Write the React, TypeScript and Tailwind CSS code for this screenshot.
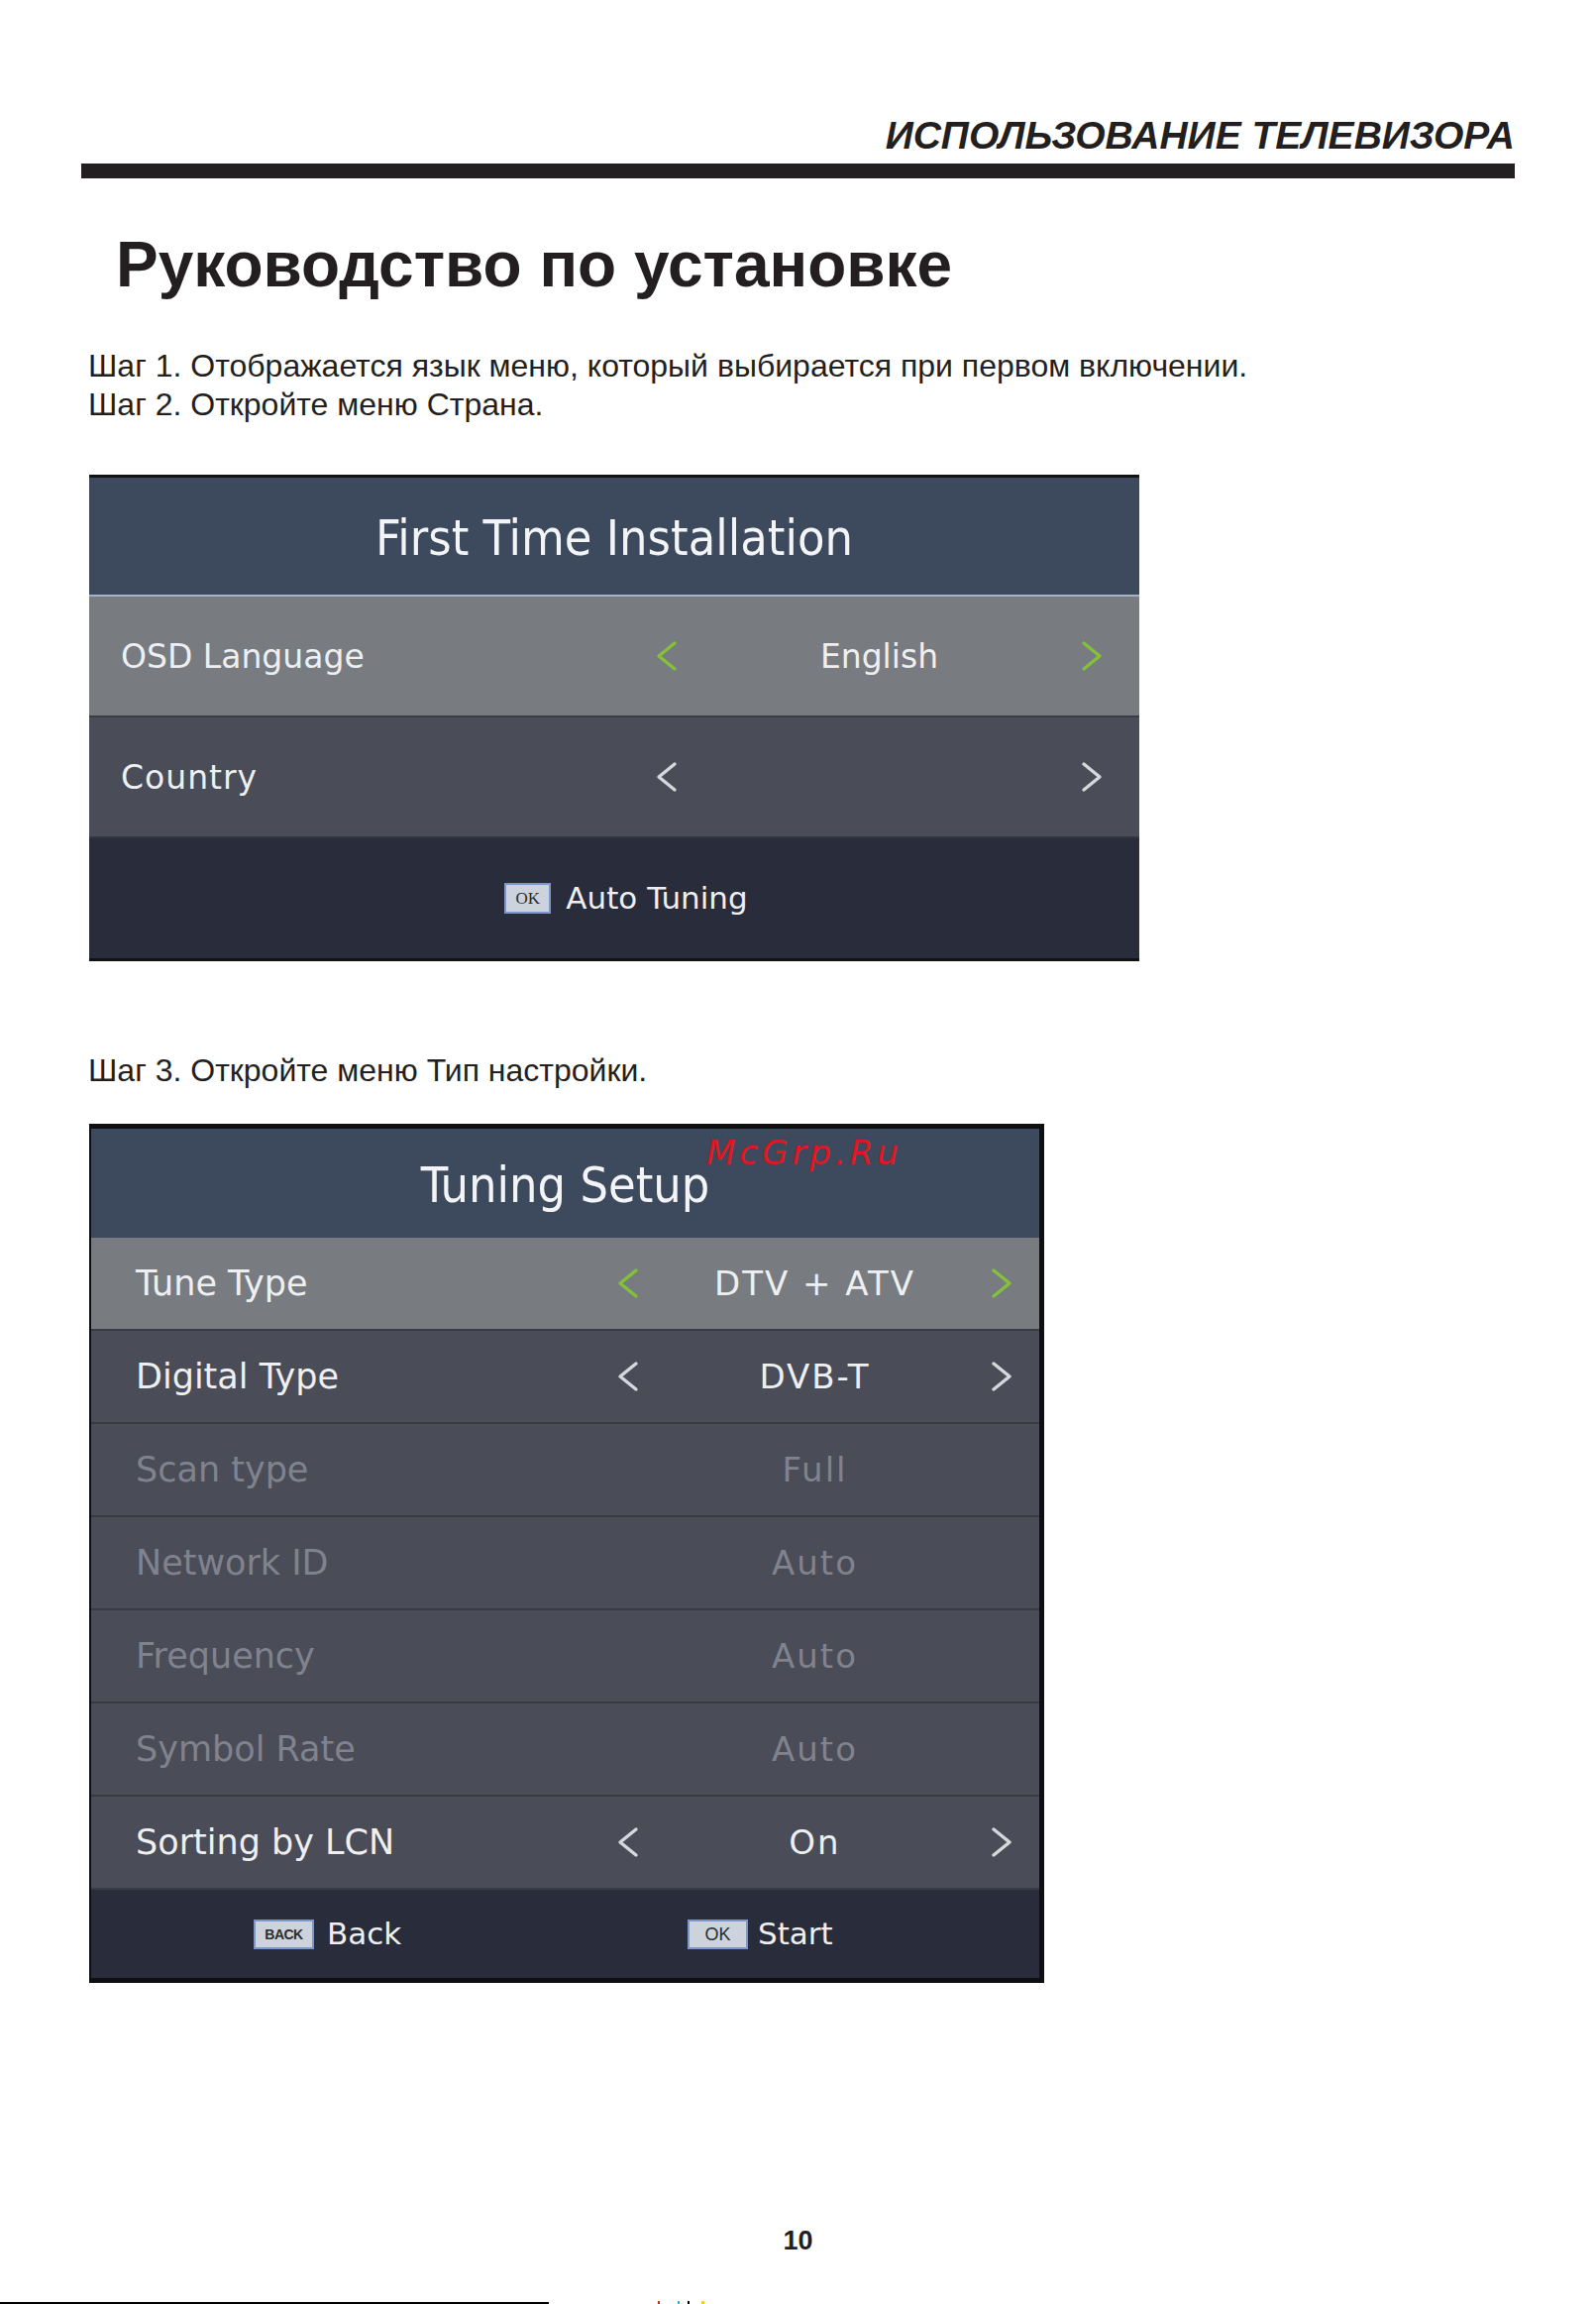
import clsx from "clsx";
import React from "react";

type ArrowTone = "green" | "white";

interface OsdRowProps {
  label: string;
  value?: string;
  arrows?: ArrowTone;
  selected?: boolean;
  disabled?: boolean;
  height: string;
  padLeft: string;
  padRight: string;
  controlWidth: string;
  labelSize: string;
  valueSize: string;
  valueTracking?: string;
}

function Chevron({ dir, tone }: { dir: "left" | "right"; tone: ArrowTone }) {
  const color = tone === "green" ? "#82c13a" : "#d6d7da";
  return (
    <svg width="26" height="32" viewBox="0 0 26 32" aria-hidden="true">
      <path
        d={dir === "left" ? "M21 3 L5 16 L21 29" : "M5 3 L21 16 L5 29"}
        fill="none"
        stroke={color}
        strokeWidth="3.4"
        strokeLinecap="round"
        strokeLinejoin="round"
      />
    </svg>
  );
}

function OsdRow({
  label,
  value,
  arrows,
  selected,
  disabled,
  height,
  padLeft,
  padRight,
  controlWidth,
  labelSize,
  valueSize,
  valueTracking,
}: OsdRowProps) {
  return (
    <div
      className={clsx(
        "flex items-center",
        height,
        padLeft,
        padRight,
        selected ? "bg-[#787c81]" : "bg-[#4a4c58]",
        disabled ? "text-[#80838d]" : "text-[#eeeff1]",
      )}
    >
      <span className={clsx("flex-1 leading-none", labelSize)}>{label}</span>
      <div className={clsx("flex items-center", controlWidth)}>
        <div className="w-[26px] h-[32px]">
          {arrows && <Chevron dir="left" tone={arrows} />}
        </div>
        <span className={clsx("flex-1 text-center leading-none", valueSize, valueTracking)}>
          {value}
        </span>
        <div className="w-[26px] h-[32px]">
          {arrows && <Chevron dir="right" tone={arrows} />}
        </div>
      </div>
    </div>
  );
}

function KeyBadge({ text, size }: { text: string; size: "sm" | "lg" }) {
  return (
    <span
      className={clsx(
        "flex items-center justify-center bg-[#cdd3dd] border-2 border-[#7d98c8] text-[#2c2c2c] leading-none",
        size === "sm"
          ? "w-[47px] h-[31px] text-[17px] font-['Liberation_Serif',serif]"
          : "w-[61px] h-[30px]",
        size === "lg" && text === "OK" && "text-[18px] font-['Liberation_Sans',sans-serif]",
        size === "lg" && text !== "OK" && "text-[14px] font-bold tracking-[-0.5px] font-['Liberation_Sans',sans-serif]",
      )}
    >
      {text}
    </span>
  );
}

function FirstTimeInstallation() {
  return (
    <div className="ml-[90px] mt-[51px] w-[1060px] border-y-[3px] border-[#111214] font-['DejaVu_Sans',sans-serif]">
      <div className="h-[118px] bg-[#3d4a5e] flex items-center justify-center pt-[4px] text-[#f3f4f6] text-[50px] leading-none font-['Liberation_Sans_Narrow','DejaVu_Sans_Condensed','Liberation_Sans',sans-serif]">
        First Time Installation
      </div>
      <div className="h-[2px] bg-[#a6b3c4]" />
      <OsdRow
        label="OSD Language"
        value="English"
        arrows="green"
        selected
        height="h-[120px]"
        padLeft="pl-[32px]"
        padRight="pr-[35px]"
        controlWidth="w-[455px]"
        labelSize="text-[33px]"
        valueSize="text-[33px]"
      />
      <div className="h-[2px] bg-[#3b3d43]" />
      <OsdRow
        label="Country"
        arrows="white"
        height="h-[120px]"
        padLeft="pl-[32px]"
        padRight="pr-[35px]"
        controlWidth="w-[455px]"
        labelSize="text-[33px] tracking-[1px]"
        valueSize="text-[33px]"
      />
      <div className="h-[2px] bg-[#34363e]" />
      <div className="h-[121px] bg-[#292c3a] flex items-center justify-center gap-[15px] pl-[24px] text-[#eeeff1] text-[31px] leading-none">
        <KeyBadge text="OK" size="sm" />
        <span>Auto Tuning</span>
      </div>
    </div>
  );
}

const tuningRows = [
  { label: "Tune Type", value: "DTV + ATV", arrows: "green" as ArrowTone, selected: true },
  { label: "Digital Type", value: "DVB-T", arrows: "white" as ArrowTone },
  { label: "Scan type", value: "Full", disabled: true },
  { label: "Network ID", value: "Auto", disabled: true },
  { label: "Frequency", value: "Auto", disabled: true },
  { label: "Symbol Rate", value: "Auto", disabled: true },
  { label: "Sorting by LCN", value: "On", arrows: "white" as ArrowTone },
];

function TuningSetup() {
  return (
    <div className="relative ml-[90px] mt-[34px] w-[964px] border-t-[5px] border-r-[5px] border-b-[5px] border-l-[2px] border-[#0e0f11] font-['DejaVu_Sans',sans-serif]">
      <div className="h-[110px] bg-[#3d4a5e] flex items-center justify-center pt-[4px] text-[#f3f4f6] text-[50px] leading-none font-['Liberation_Sans_Narrow','DejaVu_Sans_Condensed','Liberation_Sans',sans-serif]">
        Tuning Setup
      </div>
      {tuningRows.map((row) => (
        <div key={row.label} className="border-b-2 border-[#393b42]">
          <OsdRow
            label={row.label}
            value={row.value}
            arrows={row.arrows}
            selected={row.selected}
            disabled={row.disabled}
            height="h-[92px]"
            padLeft="pl-[45px]"
            padRight="pr-[25px]"
            controlWidth="w-[403px]"
            labelSize="text-[35px]"
            valueSize="text-[34px]"
            valueTracking="tracking-[2px]"
          />
        </div>
      ))}
      <div className="h-[89px] bg-[#292c3a] flex items-center text-[#eeeff1] text-[31px] leading-none">
        <div className="w-[602px] pl-[164px] flex items-center gap-[13px]">
          <KeyBadge text="BACK" size="lg" />
          <span>Back</span>
        </div>
        <div className="flex items-center gap-[10px]">
          <KeyBadge text="OK" size="lg" />
          <span>Start</span>
        </div>
      </div>
      <span className="absolute left-[621px] top-[7px] text-[34px] leading-none italic tracking-[4px] text-[#e3161e]">
        McGrp.Ru
      </span>
    </div>
  );
}

export default function App() {
  return (
    <div className="w-[1611px] h-[2325px] bg-white flex flex-col text-[#231f20] font-['Liberation_Sans',Arial,sans-serif]">
      <header className="px-[82px] pt-[117px]">
        <div className="text-right italic font-bold text-[39px] leading-[39px]">
          ИСПОЛЬЗОВАНИЕ ТЕЛЕВИЗОРА
        </div>
        <div className="mt-[9px] h-[15px] bg-[#231f20]" />
      </header>

      <h1 className="ml-[117px] mt-[55px] text-[64px] leading-[64px] font-bold">
        Руководство по установке
      </h1>

      <div className="ml-[89px] mt-[51px] text-[32px] leading-[39px]">
        <p>Шаг 1. Отображается язык меню, который выбирается при первом включении.</p>
        <p>Шаг 2. Откройте меню Страна.</p>
      </div>

      <FirstTimeInstallation />

      <p className="ml-[89px] mt-[91px] text-[32px] leading-[39px]">
        Шаг 3. Откройте меню Тип настройки.
      </p>

      <TuningSetup />

      <div className="mt-[247px] text-center text-[27px] leading-[27px] font-bold">10</div>

      <div className="mt-[47px] flex items-end">
        <div className="w-[554px] h-[2px] bg-black" />
        <div className="ml-[110px] w-[2px] h-[3px] bg-[#e0201c]" />
        <div className="ml-[18px] w-[2px] h-[3px] bg-[#1fb7d4]" />
        <div className="ml-[8px] w-[2px] h-[3px] bg-black" />
        <div className="ml-[12px] w-[3px] h-[3px] bg-[#f0d020]" />
      </div>
    </div>
  );
}
